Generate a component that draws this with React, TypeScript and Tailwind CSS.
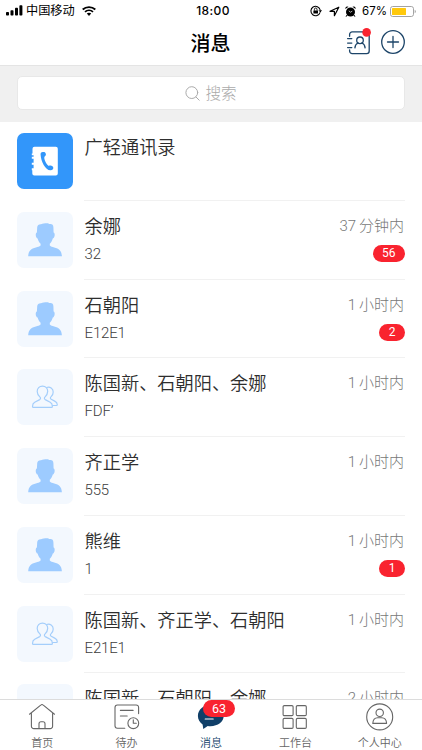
import type { ReactNode } from "react";

type Kind = "book" | "user" | "group";

interface Chat {
  kind: Kind;
  title: string;
  text?: string;
  time?: string;
  unread?: number;
}

const chats: Chat[] = [
  { kind: "book", title: "广轻通讯录" },
  { kind: "user", title: "余娜", text: "32", time: "37 分钟内", unread: 56 },
  { kind: "user", title: "石朝阳", text: "E12E1", time: "1 小时内", unread: 2 },
  { kind: "group", title: "陈国新、石朝阳、余娜", text: "FDF’", time: "1 小时内" },
  { kind: "user", title: "齐正学", text: "555", time: "1 小时内" },
  { kind: "user", title: "熊维", text: "1", time: "1 小时内", unread: 1 },
  { kind: "group", title: "陈国新、齐正学、石朝阳", text: "E21E1", time: "1 小时内" },
  { kind: "group", title: "陈国新、石朝阳、余娜", text: "", time: "2 小时内" },
];

function StatusBar() {
  return (
    <div className="grid h-5 grid-cols-3 items-center pl-1.5 pr-1.5 pt-0.5 text-black">
      <div className="flex items-center">
        <svg width="17" height="11" viewBox="0 0 17 11" fill="currentColor">
          <rect x="0" y="7" width="3" height="3.5" rx="0.8" />
          <rect x="4.5" y="5.2" width="3" height="5.3" rx="0.8" />
          <rect x="9" y="2.8" width="3" height="7.7" rx="0.8" />
          <rect x="13.4" y="0.3" width="3" height="10.2" rx="0.8" />
        </svg>
        <span className="ml-[3px] pt-px text-[12.2px] leading-none">中国移动</span>
        <svg className="ml-[7px]" width="14" height="10" viewBox="0 0 14 10" fill="none" stroke="currentColor">
          <path d="M.7 3.5C4.2.3 9.8.3 13.3 3.5" strokeWidth="1.9" />
          <path d="M3 5.9c2.3-2 5.7-2 8 0" strokeWidth="1.8" />
          <path d="M4.8 7.6 7 9.9l2.2-2.3c-1.2-1-3.2-1-4.4 0Z" fill="currentColor" stroke="none" />
        </svg>
      </div>
      <div className="pl-[4px] text-center font-['Inter',sans-serif] text-[12px] font-medium leading-none tracking-[0.4px]">18:00</div>
      <div className="flex items-center justify-end">
        <svg width="12" height="12" viewBox="0 0 12 12" fill="none" stroke="currentColor">
          <path d="M10.1 7.4A4.7 4.7 0 1 1 10.2 5" strokeWidth="1.1" />
          <path d="m8.4 5.4 2.2 2 1.3-2.5Z" fill="currentColor" stroke="none" />
          <rect x="3.4" y="5.4" width="4.6" height="3.2" rx="0.4" fill="currentColor" stroke="none" />
          <path d="M4.4 5.6V4.3a1.3 1.3 0 0 1 2.6 0v1.3" strokeWidth="0.9" />
        </svg>
        <svg className="ml-[7px]" width="11" height="11" viewBox="0 0 11 11" fill="none" stroke="currentColor" strokeWidth="1.2" strokeLinejoin="round">
          <path d="M9.8 1.2 1 5.3h4.4v4.4Z" />
        </svg>
        <svg className="ml-[5px]" width="11" height="11" viewBox="0 0 11 11" fill="currentColor">
          <circle cx="5.5" cy="6" r="4.5" />
          <path d="M.4 3A2.1 2.1 0 0 1 3.5.7ZM10.6 3A2.1 2.1 0 0 0 7.5.7Z" />
          <path d="m2 9-.9 1.7M9 9l.9 1.7" stroke="currentColor" />
          <path d="M3.8 4.8 5.5 6.2 7.3 5.1" fill="none" stroke="#fff" strokeWidth="0.7" />
        </svg>
        <span className="ml-[6px] pt-px font-['Inter',sans-serif] text-[11.5px] leading-none">67%</span>
        <svg className="ml-[3px]" width="26" height="11" viewBox="0 0 26 11">
          <rect x="0.5" y="0.5" width="23" height="10" rx="2.2" fill="none" stroke="#a3a3a3" />
          <rect x="2" y="2" width="14" height="7" rx="0.6" fill="#ffc90c" />
          <path d="M24.7 3.7c1.5.7 1.5 2.9 0 3.6Z" fill="#a3a3a3" />
        </svg>
      </div>
    </div>
  );
}

function Header() {
  return (
    <header className="h-[66px] shrink-0 border-b border-[#e4e4e4] bg-white">
      <StatusBar />
      <div className="grid h-[45px] grid-cols-3 items-center pr-[17px]">
        <div />
        <h1 className="pl-4 pt-[2px] text-center text-[20px] font-medium leading-none text-black">消息</h1>
        <div className="flex items-center justify-end gap-[9px] pb-px text-[#1d4569]">
          <svg width="26" height="28" viewBox="0 0 26 28" fill="none" stroke="currentColor" strokeWidth="1.3" strokeLinecap="round">
            <path d="M3.6 8.3V6.5a2.6 2.6 0 0 1 2.6-2.6h15a2 2 0 0 1 2 2V23a2.6 2.6 0 0 1-2.6 2.6H6.2A2.6 2.6 0 0 1 3.6 23v-1.2" />
            <path d="M1.6 10.6h4.2M1.6 15.1h4.2M1.6 19.6h4.2" />
            <circle cx="14" cy="12.3" r="3.3" />
            <path d="M8.9 19.9c.2-2.6 1.6-4.3 3.2-4.9M19.1 19.9c-.2-2.6-1.6-4.3-3.2-4.9" />
            <circle cx="20.6" cy="4.4" r="4.3" fill="#f9232f" stroke="none" />
          </svg>
          <svg width="24" height="24" viewBox="0 0 24 24" fill="none" stroke="currentColor" strokeWidth="1.3" strokeLinecap="round">
            <circle cx="12" cy="12" r="11.3" />
            <path d="M12 6.5v11M6.5 12h11" />
          </svg>
        </div>
      </div>
    </header>
  );
}

function SearchBar() {
  return (
    <div className="h-14 shrink-0 bg-[#f0f0f0] px-[17px] pt-2.5">
      <div className="flex h-[34px] items-center justify-center gap-[5px] rounded-[5px] border border-[#e8e8e8] bg-white text-[#aaa]">
        <svg width="15" height="15" viewBox="0 0 15 15" fill="none" stroke="currentColor" strokeLinecap="round">
          <circle cx="6.8" cy="6.6" r="5.9" />
          <path d="m11 11 3.2 3.2" />
        </svg>
        <span className="pt-[3px] text-[15.6px] font-light leading-none">搜索</span>
      </div>
    </div>
  );
}

function Avatar({ kind }: { kind: Kind }) {
  if (kind === "book") {
    return (
      <div className="flex size-14 shrink-0 items-center justify-center rounded-[7px] bg-[#3296fa]">
        <svg width="28" height="30" viewBox="0 0 28 30">
          <path
            fill="#fff"
            d="M3.5.7h21.3a2 2 0 0 1 2 2v24.7a2 2 0 0 1-2 2H3.3a2 2 0 0 1-2-2v-3.1H.8v-2h1.8v-3.6H.8v-2h1.8v-3.9H.8v-2h1.8V9.2H.8V7.6h.7V2.7a2 2 0 0 1 2-2Z"
          />
          <path
            fill="#3296fa"
            d="M9.6 8.7c-.3-1.4.6-2.4 2.2-2.6 1.5-.2 2.4.3 2.9 1.4.5 1 .1 2-.8 2.8-.7.7-.7 1.5-.4 2.9.5 2.2 1.7 4.2 3.1 5.7.8.9 1.3.9 2.3.7 1.5-.4 3.3.6 3.4 2.2.1 1.6-1 2.6-2.9 2.5-5.1-.2-9.5-9-9.8-15.6Z"
          />
        </svg>
      </div>
    );
  }
  return (
    <div className="flex size-14 shrink-0 items-center justify-center rounded-[7px] bg-[#f3f8fe]">
      {kind === "user" ? (
        <svg width="34" height="34" viewBox="0 0 34 34" fill="#9dcbff">
          <path d="M9.2 4.2c.2-2 1.6-3 3.8-2.9C15 .2 18 .1 20 .2c.7.3.9.9 1.9.8 2.3-.2 3.4 1 3.5 3.2l.2 5.2c1.7.4 1.4 5.2-.8 6.2-.6 2.3-1.6 4-3 5.2v1.6c1.2 1.2 2.4 1.4 4.4 2 4.8 1.2 7.5 3.2 7.7 8.9H.2c.2-5.7 2.9-7.7 7.7-8.9 2-.6 3.4-.8 4.7-2v-1.6c-1.4-1.2-2.4-2.9-3-5.2-2.2-1-2.4-5.8-.7-6.2Z" />
        </svg>
      ) : (
        <svg width="28" height="24" viewBox="0 0 28 24" fill="none" stroke="#a4cefb" strokeWidth="1.2" strokeLinejoin="round">
          <path d="M11.5 1.1c-3.2 0-5.4 2.3-5.3 5.3.1 2.1 1 4.1 2.6 5.5.9.8 1 2-.1 2.7l-5 2.7c-1.5.8-2.2 2.4-2.2 4.2 0 .6.4.9 1 .9h17.9c.6 0 1-.3 1-.9 0-1.8-.7-3.4-2.2-4.2l-5-2.7c-1.1-.7-1-1.9-.1-2.7 1.6-1.4 2.5-3.4 2.6-5.5.1-3-2-5.3-5.2-5.3Z" />
          <path d="M15.6 2.5c3.3-1.2 6.7 1 6.6 4.5 0 2-.8 3.7-2.2 4.9-.9.8-.8 1.7.2 2.3l3.5 1.9c1.7.9 2.6 2 2.6 3.6 0 .6-.3.8-.9.8h-4.1" />
        </svg>
      )}
    </div>
  );
}

function Row({ chat }: { chat: Chat }) {
  return (
    <li className="flex h-[78.75px] shrink-0 gap-[11px] px-[17px]">
      <div className="pt-[11px]">
        <Avatar kind={chat.kind} />
      </div>
      <div className="flex min-w-0 flex-1 justify-between border-b border-[#f1f1f1]">
        <div className="pl-[0.6px] pt-4">
          <div className="text-[18.2px] leading-5 text-[#2e2e2e] [font-weight:350]">{chat.title}</div>
          <div className="mt-[7px] text-[15px] font-light leading-5 tracking-[-0.2px] text-[#3c3c3c]">{chat.text}</div>
        </div>
        <div className="flex flex-col items-end pt-[15px]">
          <div className="pr-px text-[15px] font-light leading-5 text-[#777] [word-spacing:-0.8px]">{chat.time}</div>
          {chat.unread && (
            <span className="mt-[9px] flex h-[17px] items-center rounded-full bg-[#f9232f] px-[9.5px] text-[12px] leading-none text-white">
              {chat.unread}
            </span>
          )}
        </div>
      </div>
    </li>
  );
}

function Tab({ label, active, children }: { label: string; active?: boolean; children: ReactNode }) {
  return (
    <div className={`flex flex-1 flex-col items-center pt-[3px] ${active ? "text-[#103f68]" : "text-[#666]"}`}>
      <div className="relative">
        <svg width="28" height="28" viewBox="0 0 28 28" fill="none" stroke="currentColor" strokeWidth="1.1" strokeLinecap="round" strokeLinejoin="round">
          {children}
        </svg>
        {active && (
          <span className="absolute -top-[3px] left-[6px] flex h-[17px] w-[32px] items-center justify-center rounded-full bg-[#f9232f] pt-px text-[12.5px] text-white">
            63
          </span>
        )}
      </div>
      <span className="mt-[6px] text-[11px] leading-[14px] [font-weight:350]">{label}</span>
    </div>
  );
}

function TabBar() {
  return (
    <nav className="flex h-[51px] shrink-0 border-t border-[#dcdcdc] bg-white">
      <Tab label="首页">
        <path d="M1.5 11.2 12.7 2.1a2 2 0 0 1 2.6 0l11.2 9.1M3.4 9.8v13.4a2.4 2.4 0 0 0 2.4 2.4h16.4a2.4 2.4 0 0 0 2.4-2.4V9.8" />
        <path d="M11 25.3v-4.6a2 2 0 0 1 2-2h2a2 2 0 0 1 2 2v4.6" />
      </Tab>
      <Tab label="待办">
        <path d="M25.6 10.6V4.4A2.4 2.4 0 0 0 23.2 2H4.4A2.4 2.4 0 0 0 2 4.4v18.4a2.4 2.4 0 0 0 2.4 2.4h7.4M7.4 7.4h12.7M7.4 13h6.8" />
        <circle cx="20.3" cy="20.2" r="5.4" />
        <path d="M20.3 16.8v3.4h3" />
      </Tab>
      <Tab label="消息" active>
        <path d="M13.7 1.8C6.8 1.8.9 6.5.9 13c0 3.7 1.9 6.5 4.7 8.4l.7 4.5 4.4-2.9c8.8 1.2 16-3.4 16-10.2 0-6.5-5.8-11-13-11Z" fill="currentColor" stroke="none" />
        <path d="M8.2 16h8" stroke="#fff" />
      </Tab>
      <Tab label="工作台">
        <rect x="2.1" y="2.6" width="10" height="10" rx="1.2" />
        <rect x="15.3" y="2.6" width="10" height="10" rx="1.2" />
        <rect x="2.1" y="15.4" width="10" height="10" rx="1.2" />
        <rect x="15.3" y="15.4" width="10" height="10" rx="1.2" />
      </Tab>
      <Tab label="个人中心">
        <circle cx="13.7" cy="13.9" r="13" />
        <circle cx="13.7" cy="9.8" r="3.7" />
        <path d="M6.8 20.4c.2-3.4 2.2-5.6 4.9-5.6h4c2.7 0 4.7 2.2 4.9 5.6Z" />
      </Tab>
    </nav>
  );
}

export default function App() {
  return (
    <div className="flex h-[750px] w-[422px] flex-col overflow-hidden bg-white font-['Roboto','Noto_Sans_CJK_SC',sans-serif]">
      <Header />
      <SearchBar />
      <ul className="flex min-h-0 flex-1 flex-col overflow-hidden">
        {chats.map((chat, i) => (
          <Row key={i} chat={chat} />
        ))}
      </ul>
      <TabBar />
    </div>
  );
}
